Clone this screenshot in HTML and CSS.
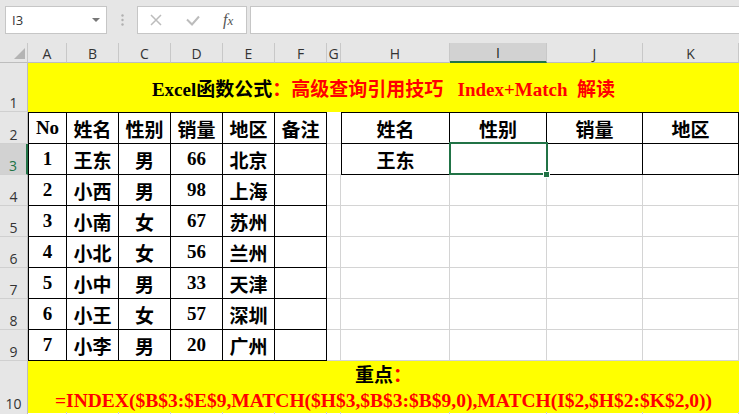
FILE: index.html
```html
<!DOCTYPE html>
<html>
  <head>
    <title>Index+Match</title>
    <link rel="stylesheet" href="styles.css">
  </head>
  <body>
    <div class="fbar">
      <div class="namebox">I3<span class="arrow"></span></div>
      <div class="dots">
        <svg width="3" height="12" viewBox="0 0 3 12"><circle cx="1.5" cy="1.5" r="1.2"/><circle cx="1.5" cy="6" r="1.2"/><circle cx="1.5" cy="10.5" r="1.2"/></svg>
      </div>
      <div class="fxbox">
        <svg class="x" width="12" height="12" viewBox="0 0 12 12"><path d="M1 1L11 11M11 1L1 11"/></svg>
        <svg class="ok" width="14" height="11" viewBox="0 0 14 11"><path d="M1 4.5L6 9.5L13 1.5"/></svg>
        <span class="fx">f<span>x</span></span>
      </div>
      <div class="finput"></div>
    </div>

    <div class="sheet">
      <div class="row hdr">
        <div class="corner"><span></span></div>
        <div>A</div><div>B</div><div>C</div><div>D</div><div>E</div><div>F</div><div>G</div>
        <div>H</div><div class="hsel">I</div><div>J</div><div>K</div>
      </div>

      <div class="row r1">
        <div class="rh">1</div>
        <div class="banner title">Excel函数公式<span class="red">：高级查询引用技巧&nbsp;&nbsp;&nbsp;Index+Match&nbsp;&nbsp;解读</span></div>
      </div>

      <div class="row r2">
        <div class="rh">2</div>
        <div class="c t tt tl">No</div><div class="c t tt">姓名</div><div class="c t tt">性别</div>
        <div class="c t tt">销量</div><div class="c t tt">地区</div><div class="c t tt">备注</div>
        <div class="c g0"></div>
        <div class="c t tt tl">姓名</div><div class="c t tt">性别</div><div class="c t tt">销量</div><div class="c t tt">地区</div>
      </div>

      <div class="row">
        <div class="rh rsel">3</div>
        <div class="c t tl">1</div><div class="c t">王东</div><div class="c t">男</div>
        <div class="c t">66</div><div class="c t">北京</div><div class="c t"></div>
        <div class="c g0"></div>
        <div class="c t tl">王东</div>
        <div class="c t sel"><div class="cursor"><span class="handle"></span></div></div>
        <div class="c t"></div><div class="c t"></div>
      </div>

      <div class="row">
        <div class="rh">4</div>
        <div class="c t tl">2</div><div class="c t">小西</div><div class="c t">男</div>
        <div class="c t">98</div><div class="c t">上海</div><div class="c t"></div>
        <div class="c"></div><div class="c"></div><div class="c"></div><div class="c"></div><div class="c"></div>
      </div>

      <div class="row">
        <div class="rh">5</div>
        <div class="c t tl">3</div><div class="c t">小南</div><div class="c t">女</div>
        <div class="c t">67</div><div class="c t">苏州</div><div class="c t"></div>
        <div class="c"></div><div class="c"></div><div class="c"></div><div class="c"></div><div class="c"></div>
      </div>

      <div class="row">
        <div class="rh">6</div>
        <div class="c t tl">4</div><div class="c t">小北</div><div class="c t">女</div>
        <div class="c t">56</div><div class="c t">兰州</div><div class="c t"></div>
        <div class="c"></div><div class="c"></div><div class="c"></div><div class="c"></div><div class="c"></div>
      </div>

      <div class="row">
        <div class="rh">7</div>
        <div class="c t tl">5</div><div class="c t">小中</div><div class="c t">男</div>
        <div class="c t">33</div><div class="c t">天津</div><div class="c t"></div>
        <div class="c"></div><div class="c"></div><div class="c"></div><div class="c"></div><div class="c"></div>
      </div>

      <div class="row">
        <div class="rh">8</div>
        <div class="c t tl">6</div><div class="c t">小王</div><div class="c t">女</div>
        <div class="c t">57</div><div class="c t">深圳</div><div class="c t"></div>
        <div class="c"></div><div class="c"></div><div class="c"></div><div class="c"></div><div class="c"></div>
      </div>

      <div class="row">
        <div class="rh">9</div>
        <div class="c t tl">7</div><div class="c t">小李</div><div class="c t">男</div>
        <div class="c t">20</div><div class="c t">广州</div><div class="c t"></div>
        <div class="c"></div><div class="c"></div><div class="c"></div><div class="c"></div><div class="c"></div>
      </div>

      <div class="row r10">
        <div class="rh">10</div>
        <div class="banner note">
          <div>重点<span class="red">：</span></div>
          <div class="red formula">=INDEX($B$3:$E$9,MATCH($H$3,$B$3:$B$9,0),MATCH(I$2,$H$2:$K$2,0))</div>
        </div>
      </div>

      <div class="row">
        <div class="rh"></div>
        <div class="c"></div><div class="c"></div><div class="c"></div><div class="c"></div><div class="c"></div><div class="c"></div>
        <div class="c"></div><div class="c"></div><div class="c"></div><div class="c"></div><div class="c"></div>
      </div>
    </div>
  </body>
</html>
```

FILE: styles.css
```css
* {
  box-sizing: border-box;
}

body {
  margin: 0;
  background: #fff;
  font-family: "Open Sans", sans-serif;
  overflow: hidden;
}

/* formula bar */
.fbar {
  display: flex;
  height: 43px;
  padding: 6px 0 0 5px;
  background: #e6e6e6;
}

.namebox {
  width: 102px;
  height: 28px;
  background: #fff;
  border: 1px solid #c6c6c6;
  display: flex;
  align-items: center;
  padding-left: 6px;
  font-size: 13px;
  color: #333;
}

.namebox .arrow {
  margin-left: auto;
  margin-right: 6px;
  border-left: 4px solid transparent;
  border-right: 4px solid transparent;
  border-top: 4px solid #777;
}

.dots {
  width: 30px;
  display: flex;
  justify-content: center;
  padding-top: 8px;
}

.dots svg {
  fill: #b0b0b0;
}

.fxbox {
  width: 110px;
  height: 28px;
  background: #fff;
  border: 1px solid #c6c6c6;
  display: flex;
  align-items: center;
  padding-left: 12px;
}

.fxbox svg {
  fill: none;
  stroke: #bcbcbc;
}

.fxbox .x {
  stroke-width: 1.5;
}

.fxbox .ok {
  margin-left: 24px;
  stroke-width: 2;
}

.fx {
  margin-left: 23px;
  font: italic 16px "Liberation Serif", serif;
  color: #555;
}

.fx span {
  font-size: 13px;
}

.finput {
  flex: 1;
  height: 28px;
  margin-left: 3px;
  background: #fff;
  border: 1px solid #c6c6c6;
  border-right: none;
}

/* sheet grid */
.row {
  display: grid;
  grid-template-columns: 28px 39px 52px 52px 52px 52px 52px 14px 109px 97px 96px 96px;
  height: 31px;
}

.hdr {
  height: 20px;
  background: #e6e6e6;
}

.hdr > div {
  border-right: 1px solid #c8c8c8;
  border-bottom: 1px solid #bdbdbd;
  display: flex;
  align-items: flex-end;
  justify-content: center;
  font-size: 14px;
  line-height: 17px;
  color: #333;
}

.hdr .corner {
  justify-content: flex-end;
  padding: 0 2px 3px 0;
}

.corner span {
  border-left: 11px solid transparent;
  border-bottom: 11px solid #b4b4b4;
}

.hdr .hsel {
  background: #d2d2d2;
  border-bottom: 2px solid #217346;
  color: #222;
}

.r1 {
  height: 49px;
}

.r2 {
  height: 32px;
}

.r10 {
  height: 51px;
}

.rh {
  background: #e6e6e6;
  border-right: 1px solid #bdbdbd;
  border-bottom: 1px solid #d0d0d0;
  display: flex;
  align-items: flex-end;
  justify-content: center;
  font-size: 14px;
  line-height: 16px;
  color: #333;
}

.rh.rsel {
  background: #d2d2d2;
  border-right: 2px solid #217346;
  color: #217346;
}

.c {
  border-right: 1px solid #d4d4d4;
  border-bottom: 1px solid #d4d4d4;
  display: flex;
  align-items: center;
  justify-content: center;
  font: bold 19px "Liberation Serif", "Noto Sans CJK SC", serif;
  color: #000;
}

.t {
  border-right-color: #000;
  border-bottom-color: #000;
}

.tl {
  border-left: 1px solid #000;
}

.tt {
  border-top: 1px solid #000;
}

.g0 {
  border-right: none;
}

.sel {
  position: relative;
}

.cursor {
  position: absolute;
  left: -1px;
  top: -2px;
  right: -2px;
  bottom: -1px;
  border: 2px solid #217346;
}

.handle {
  position: absolute;
  right: -4px;
  bottom: -5px;
  width: 7px;
  height: 7px;
  background: #217346;
  border: 1px solid #fff;
}

.banner {
  grid-column: 2 / -1;
  background: #ff0;
  display: flex;
  align-items: center;
  justify-content: center;
  font: bold 19px "Liberation Serif", "Noto Sans CJK SC", serif;
  color: #000;
}

.note {
  flex-direction: column;
  line-height: 25px;
  padding-top: 2px;
}

.formula {
  font-size: 19.5px;
}

.red {
  color: #f00;
}
```
